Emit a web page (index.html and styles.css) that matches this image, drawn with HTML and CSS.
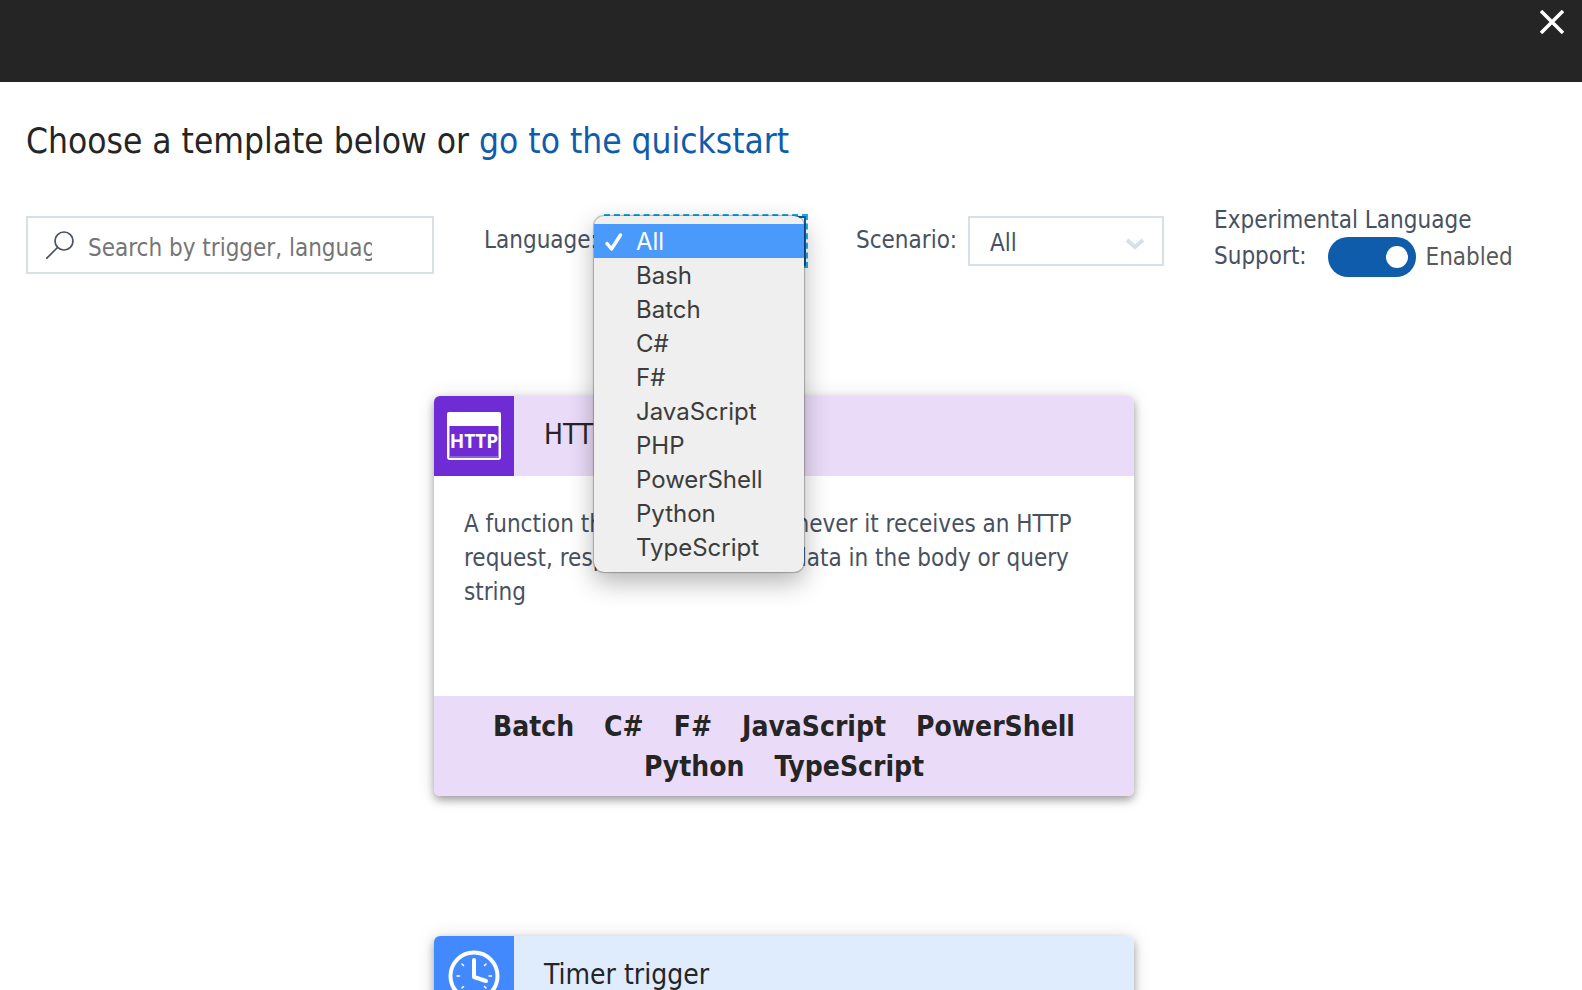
FILE: index.html
```html
<!DOCTYPE html>
<html lang="en">
<head>
<meta charset="utf-8">
<title>Choose a template</title>
<link rel="stylesheet" href="styles.css">
</head>
<body>
<header class="topbar">
  <button class="close" type="button" aria-label="Close">
    <svg width="24" height="24" viewBox="0 0 24 24" fill="none" stroke="#fff" stroke-width="3.500"><path d="M1 1L23 23M23 1L1 23"/></svg>
  </button>
</header>
<main class="page">
  <h1 class="title">Choose a template below or <a class="link" href="#quickstart">go to the quickstart</a></h1>

  <form class="filters">
    <div class="search">
      <svg width="28" height="28" viewBox="0 0 28 28" fill="none" stroke="#48515f" stroke-width="1.700"><circle cx="18" cy="10" r="9"/><path d="M12 16L0 28"/></svg>
      <input class="search-input" type="text" aria-label="Search" placeholder="Search by trigger, language, or description">
    </div>

    <div class="field">
      <label class="label" for="language">Language:</label>
      <div class="picker">
        <select class="select select-focus" id="language"><option>All</option></select>
        <ul class="menu" role="listbox" aria-label="Language">
          <li class="option selected" role="option" aria-selected="true">
            <svg class="tick" width="20" height="20" viewBox="0 0 20 20" fill="none" stroke="#fff" stroke-width="3.500" stroke-linecap="round" stroke-linejoin="round"><path d="M3 11.500L7.500 17L16.500 3"/></svg>All</li>
          <li class="option" role="option">Bash</li>
          <li class="option" role="option">Batch</li>
          <li class="option" role="option">C#</li>
          <li class="option" role="option">F#</li>
          <li class="option" role="option">JavaScript</li>
          <li class="option" role="option">PHP</li>
          <li class="option" role="option">PowerShell</li>
          <li class="option" role="option">Python</li>
          <li class="option" role="option">TypeScript</li>
        </ul>
      </div>
    </div>

    <div class="field scenario">
      <label class="label" for="scenario">Scenario:</label>
      <div class="picker">
        <select class="select" id="scenario"><option>All</option></select>
        <svg class="chevron" width="20" height="12" viewBox="0 0 20 12" fill="none" stroke="#d6e0e6" stroke-width="4"><path d="M2 2L10 9L18 2"/></svg>
      </div>
    </div>

    <div class="experimental">
      <label class="label" for="experimental">Experimental Language Support:</label>
      <span class="switch">
        <input class="toggle" id="experimental" type="checkbox" role="switch" checked>
        <span class="state">Enabled</span>
      </span>
    </div>
  </form>

  <section class="cards">
    <article class="card http">
      <div class="card-head">
        <div class="card-icon">
          <svg width="54" height="48" viewBox="0 0 54 48"><rect x="1" y="2" width="52" height="45" rx="2" fill="none" stroke="#fff" stroke-width="2"/><path d="M0 14V2Q0 0 2 0H52Q54 0 54 2V14Z" fill="#fff"/><path d="M2.500 14V45H51.500V14" fill="none" stroke="#b48ee8"/><text x="27" y="36" text-anchor="middle" class="icon-text">HTTP</text></svg>
        </div>
        <h2 class="card-title">HTTP trigger</h2>
      </div>
      <p class="card-text">A function that will be run whenever it receives an HTTP request, responding based on data in the body or query string</p>
      <div class="tags"><span>Batch</span><span>C#</span><span>F#</span><span>JavaScript</span><span>PowerShell</span><span>Python</span><span>TypeScript</span></div>
    </article>
    <article class="card timer">
      <div class="card-head">
        <div class="card-icon">
          <svg width="52" height="52" viewBox="0 0 52 52" fill="none" stroke="#fff" stroke-linecap="round"><circle cx="26" cy="26" r="23.500" stroke-width="4"/><path d="M26 10V27L38 31" stroke-width="4" stroke-linejoin="round"/><path d="M14 14L15.500 15.500M38 14L36.500 15.500M9 26H11.500M41 26H43.500M14 38L15.500 36.500M38 38L36.500 36.500M26 41V43" stroke-width="1.500"/></svg>
        </div>
        <h2 class="card-title">Timer trigger</h2>
      </div>
    </article>
  </section>
</main>
</body>
</html>
```
FILE: styles.css
```css
* {
  box-sizing: border-box;
}

html {
  height: 100%;
  overflow: hidden;
}

body {
  height: 100%;
  margin: 0;
  overflow: hidden;
  background: #fff;
  color: #252525;
  font-family: "DejaVu Sans Condensed", "Noto Sans", sans-serif;
  font-size: 24px;
}

.topbar {
  display: flex;
  justify-content: flex-end;
  align-items: flex-start;
  height: 82px;
  padding: 10px 18px;
  background: #252525;
}

.close {
  display: flex;
  padding: 0;
  border: 0;
  background: none;
}

.page {
  padding: 34px 40px 0 26px;
}

.title {
  margin: 0 0 50px;
  font-size: 35px;
  font-weight: 400;
  line-height: 50px;
}

.link {
  color: #0f5cab;
  text-decoration: none;
}

.filters {
  display: flex;
  align-items: flex-start;
  gap: 50px;
  height: 180px;
}

.search {
  display: flex;
  align-items: center;
  gap: 14px;
  width: 408px;
  height: 58px;
  padding: 0 60px 0 18px;
  border: 2px solid #d6e0e6;
}

.search svg {
  flex: none;
}

.search-input {
  flex: 1;
  min-width: 0;
  padding: 5px 0 0;
  border: 0;
  outline: 0;
  background: none;
  font-family: inherit;
  font-size: 24px;
}

.search-input::placeholder {
  color: #757575;
}

.field {
  display: flex;
  align-items: flex-start;
  justify-content: space-between;
  width: 322px;
}

.scenario {
  width: 308px;
}

.label {
  min-width: 0;
  color: #48515f;
  line-height: 48px;
}

.picker {
  position: relative;
  flex: none;
}

.select {
  display: block;
  width: 196px;
  height: 50px;
  padding: 4px 20px 0;
  appearance: none;
  border: 2px solid #d6e0e6;
  border-radius: 0;
  background: #fff;
  color: #48515f;
  font-family: inherit;
  font-size: 24px;
}

.select-focus {
  width: 200px;
  border-color: #0f5cab;
  outline: 2px dashed #1fb0e6;
}

.chevron {
  position: absolute;
  top: 22px;
  right: 19px;
  pointer-events: none;
}

.menu {
  position: absolute;
  top: 0;
  right: 2px;
  z-index: 2;
  width: 210px;
  margin: 0;
  padding: 8px 0;
  border-radius: 10px;
  background: #efefef;
  box-shadow: 0 0 1px 1px rgba(0, 0, 0, 0.25), 0 10px 26px rgba(0, 0, 0, 0.3);
  color: #3c3c3c;
  font-family: Inter, sans-serif;
  list-style: none;
}

.option {
  padding: 2px 0 0 42px;
  line-height: 32px;
}

.selected {
  position: relative;
  background: #4a9afb;
  color: #fff;
}

.tick {
  position: absolute;
  top: 8px;
  left: 10px;
}

.experimental {
  flex: 1;
  max-width: 320px;
  margin-top: -14px;
}

.experimental .label {
  line-height: 36px;
}

.switch {
  display: inline-flex;
  align-items: center;
  gap: 10px;
  height: 36px;
  margin-left: 14px;
  vertical-align: middle;
}

.toggle {
  display: flex;
  align-items: center;
  justify-content: flex-end;
  width: 88px;
  height: 40px;
  margin: 0;
  padding: 0 8px;
  appearance: none;
  border-radius: 20px;
  background: #0f5cab;
}

.toggle::before {
  content: "";
  width: 22px;
  height: 22px;
  border-radius: 50%;
  background: #fff;
}

.state {
  color: #595959;
}

.cards {
  display: flex;
  flex-direction: column;
  align-items: center;
  gap: 140px;
}

.card {
  display: flex;
  flex-direction: column;
  width: 100%;
  max-width: 700px;
  min-height: 400px;
  overflow: hidden;
  border-radius: 6px;
  box-shadow: 0 4px 8px rgba(0, 0, 0, 0.35), 0 0 20px rgba(0, 0, 0, 0.1);
}

.card-head {
  display: flex;
  height: 80px;
}

.card-icon {
  display: flex;
  flex: none;
  align-items: center;
  justify-content: center;
  width: 80px;
}

.icon-text {
  fill: #fff;
  font-family: "Open Sans", sans-serif;
  font-size: 19px;
  font-weight: 700;
}

.card-title {
  margin: 0 30px;
  font-size: 28px;
  font-weight: 400;
  line-height: 78px;
}

.card-text {
  flex: 1;
  margin: 0;
  padding: 31px 30px 29px;
  color: #48515f;
  line-height: 34px;
}

.tags {
  display: flex;
  flex-wrap: wrap;
  justify-content: center;
  column-gap: 30px;
  padding: 11px 40px 9px;
  font-size: 28px;
  font-weight: 700;
  line-height: 40px;
}

.http .card-head,
.http .tags {
  background: #eadcf8;
}

.http .card-icon {
  background: #6f2bd4;
}

.timer .card-head {
  background: #dfecfe;
}

.timer .card-icon {
  background: #4289fd;
}
```
